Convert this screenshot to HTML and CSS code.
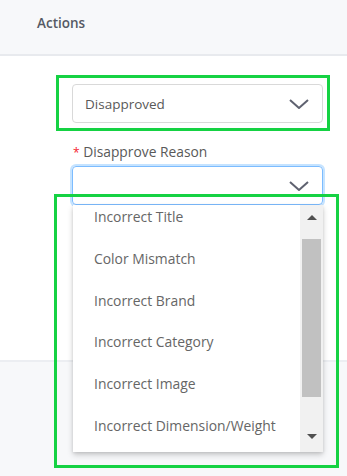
FILE: index.html
```html
<!DOCTYPE html>
<html>
<head>
    <title>Actions</title>
    <link rel="stylesheet" href="styles.css">
</head>
<body>
    <div class="header">Actions</div>

    <div class="content">
        <div class="select">
            <span class="selectValue">Disapproved</span>
            <svg class="chevron" width="20" height="10" viewBox="0 0 20 10"><path d="M1 1 L10 9 L19 1" fill="none" stroke="#5f6270" stroke-width="2"/></svg>
        </div>
        <div class="fieldLabel"><span class="required">*</span> Disapprove Reason</div>
        <div class="select focused">
            <span class="selectValue"></span>
            <svg class="chevron" width="20" height="10" viewBox="0 0 20 10"><path d="M1 1 L10 9 L19 1" fill="none" stroke="#5f6270" stroke-width="2"/></svg>
        </div>
    </div>
    <div class="footer"></div>

    <!-- dropdown yang terbuka -->
    <div class="dropdown">
        <ul class="optionList">
            <li>Incorrect Title</li>
            <li>Color Mismatch</li>
            <li>Incorrect Brand</li>
            <li>Incorrect Category</li>
            <li>Incorrect Image</li>
            <li>Incorrect Dimension/Weight</li>
        </ul>
        <div class="scrollBar">
            <div class="arrowUp"></div>
            <div class="thumb"></div>
            <div class="arrowDown"></div>
        </div>
    </div>

    <!-- kotak penanda hijau -->
    <div class="mark markStatus"></div>
    <div class="mark markReason"></div>
</body>
</html>
```
FILE: styles.css
```css
body {
    margin: 0;
    font-family: "Open Sans", "Noto Sans", sans-serif;
    background-color: #ffffff;
    overflow: hidden;
}

.header {
    height: 54px;
    padding-left: 37px;
    line-height: 46px;
    font-size: 13.5px;
    font-weight: 600;
    color: #555a64;
    background-color: #f7f8fa;
    border-bottom: 2px solid #e8eaee;
}

.content {
    height: 304px;
    padding: 28px 0 0 72px;
    box-sizing: border-box;
}

.select {
    width: 251px;
    height: 39px;
    box-sizing: border-box;
    border: 1px solid #d9d9d9;
    border-radius: 4px;
    display: flex;
    align-items: center;
    justify-content: space-between;
    padding: 0 13px 0 12px;
}

.select.focused {
    border-color: #7cbcff;
    box-shadow: 0 0 0 2px rgba(24, 144, 255, 0.25);
}

.selectValue {
    font-size: 13.5px;
    color: #595959;
}

.chevron {
    display: block;
}

.fieldLabel {
    margin: 20px 0 4px 1px;
    font-size: 13.8px;
    color: #595959;
    line-height: 18px;
}

.required {
    color: #f5222d;
    font-size: 12px;
}

.footer {
    height: 116px;
    box-sizing: border-box;
    background-color: #f7f8fa;
    border-top: 2px solid #eceef2;
}

.dropdown {
    position: absolute;
    left: 73px;
    top: 205px;
    width: 250px;
    height: 247px;
    background-color: #ffffff;
    box-shadow: 0 3px 6px rgba(0, 0, 0, 0.18), 0 1px 3px rgba(0, 0, 0, 0.1);
    overflow: hidden;
    display: flex;
}

.optionList {
    list-style-type: none;
    margin: -9px 0 0 0;
    padding: 0;
    flex: 1;
}

.optionList li {
    height: 41.8px;
    line-height: 41.8px;
    padding-left: 21px;
    font-size: 13.9px;
    color: #666666;
    white-space: nowrap;
}

.scrollBar {
    width: 23px;
    background-color: #f1f1f1;
    display: flex;
    flex-direction: column;
    align-items: center;
}

.arrowUp,
.arrowDown {
    width: 0;
    height: 0;
    border-left: 5px solid transparent;
    border-right: 5px solid transparent;
}

.arrowUp {
    margin-top: 10px;
    border-bottom: 5px solid #505050;
}

.arrowDown {
    margin-top: 37px;
    border-top: 5px solid #505050;
}

.thumb {
    width: 19px;
    height: 158px;
    margin-top: 19px;
    background-color: #c1c1c1;
}

.mark {
    position: absolute;
    border: 3px solid #15d243;
    box-sizing: border-box;
}

.markStatus {
    left: 56px;
    top: 75px;
    width: 274px;
    height: 56px;
}

.markReason {
    left: 54px;
    top: 194px;
    width: 285px;
    height: 274px;
}
```
